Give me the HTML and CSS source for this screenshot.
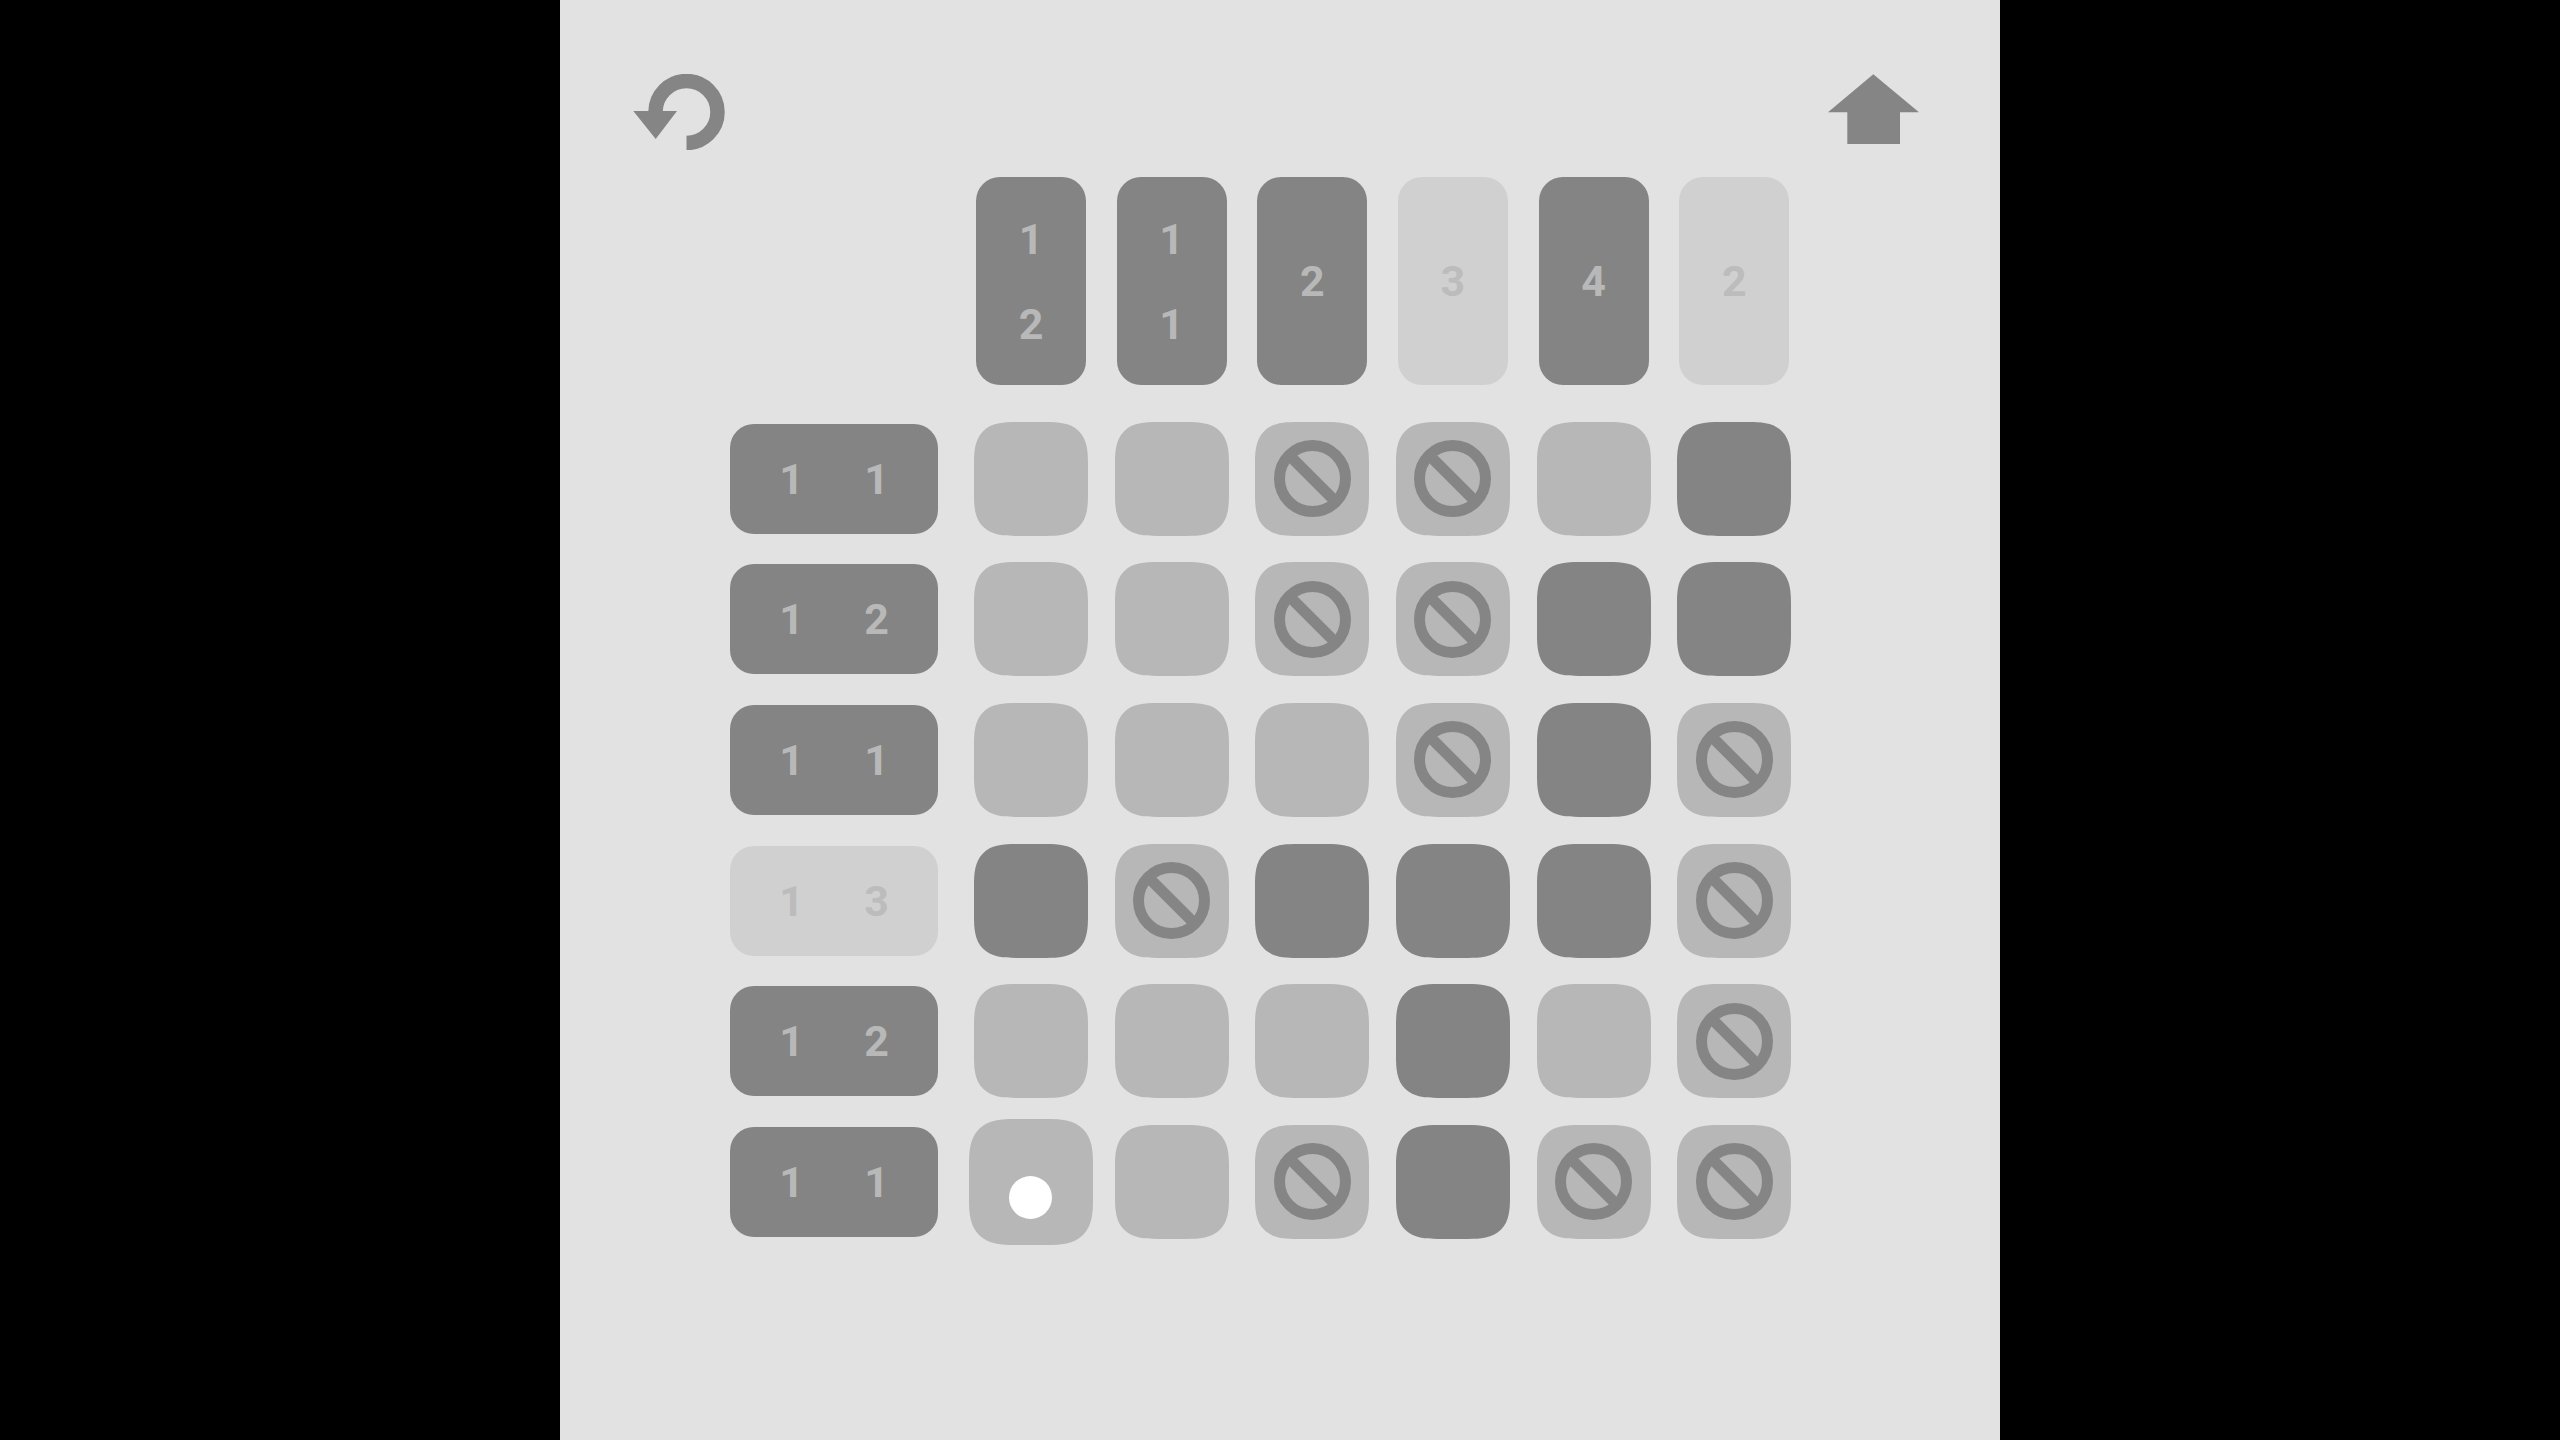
FILE: index.html
```html
<!DOCTYPE html>
<html lang="en">
<head>
  <meta charset="UTF-8" />
  <title>Nonogram</title>
  <link rel="stylesheet" href="styles.css">
</head>
<body>
  <svg class="defs" width="0" height="0">
    <symbol id="ban" viewBox="0 0 77 77">
      <circle cx="38.5" cy="38.5" r="33" fill="none" stroke="currentColor" stroke-width="11" />
      <line x1="15" y1="15" x2="62" y2="62" stroke="currentColor" stroke-width="11" />
    </symbol>
  </svg>

  <main class="panel">
    <div class="topbar">
      <svg class="icon-undo" width="92" height="76" viewBox="633 74 92 76">
        <path d="M655.5 112 A31 31 0 1 1 686.5 143" fill="none" stroke="#858585" stroke-width="14.5" />
        <path d="M633.3 111 H677 L655.7 139 Z" fill="#858585" />
      </svg>
      <svg class="icon-home" width="91" height="70" viewBox="1828 74 91 70">
        <path d="M1873.3 74.3 L1919 112.3 H1900 V144 H1847.3 V112.3 H1828 Z" fill="#858585" />
      </svg>
    </div>

    <div class="board">
      <!-- top clues -->
      <div></div>
      <div class="clue col"><span>1</span><span>2</span></div>
      <div class="clue col"><span>1</span><span>1</span></div>
      <div class="clue col"><span>2</span></div>
      <div class="clue col done"><span>3</span></div>
      <div class="clue col"><span>4</span></div>
      <div class="clue col done"><span>2</span></div>

      <!-- row 1 -->
      <div class="clue row"><span>1</span><span>1</span></div>
      <div class="cell"></div>
      <div class="cell"></div>
      <div class="cell"><svg class="ban"><use href="#ban" /></svg></div>
      <div class="cell"><svg class="ban"><use href="#ban" /></svg></div>
      <div class="cell"></div>
      <div class="cell on"></div>

      <!-- row 2 -->
      <div class="clue row"><span>1</span><span>2</span></div>
      <div class="cell"></div>
      <div class="cell"></div>
      <div class="cell"><svg class="ban"><use href="#ban" /></svg></div>
      <div class="cell"><svg class="ban"><use href="#ban" /></svg></div>
      <div class="cell on"></div>
      <div class="cell on"></div>

      <!-- row 3 -->
      <div class="clue row"><span>1</span><span>1</span></div>
      <div class="cell"></div>
      <div class="cell"></div>
      <div class="cell"></div>
      <div class="cell"><svg class="ban"><use href="#ban" /></svg></div>
      <div class="cell on"></div>
      <div class="cell"><svg class="ban"><use href="#ban" /></svg></div>

      <!-- row 4 -->
      <div class="clue row done"><span>1</span><span>3</span></div>
      <div class="cell on"></div>
      <div class="cell"><svg class="ban"><use href="#ban" /></svg></div>
      <div class="cell on"></div>
      <div class="cell on"></div>
      <div class="cell on"></div>
      <div class="cell"><svg class="ban"><use href="#ban" /></svg></div>

      <!-- row 5 -->
      <div class="clue row"><span>1</span><span>2</span></div>
      <div class="cell"></div>
      <div class="cell"></div>
      <div class="cell"></div>
      <div class="cell on"></div>
      <div class="cell"></div>
      <div class="cell"><svg class="ban"><use href="#ban" /></svg></div>

      <!-- row 6 -->
      <div class="clue row"><span>1</span><span>1</span></div>
      <div class="cell current"><div class="dot"></div></div>
      <div class="cell"></div>
      <div class="cell"><svg class="ban"><use href="#ban" /></svg></div>
      <div class="cell on"></div>
      <div class="cell"><svg class="ban"><use href="#ban" /></svg></div>
      <div class="cell"><svg class="ban"><use href="#ban" /></svg></div>
    </div>
  </main>
</body>
</html>
```

FILE: styles.css
```css
html, body { margin: 0; height: 100%; background: #000; overflow: hidden; }
.defs { display: block; height: 0; }

.panel { width: 1440px; height: 1440px; margin: 0 auto; background: #e2e2e2; box-sizing: border-box; padding: 74px 81px 0 73px; }

.topbar { display: flex; justify-content: space-between; align-items: flex-start; height: 103px; }
.topbar svg { display: block; }

.board { display: grid; grid-template-columns: 217.33px repeat(6, 114px); grid-template-rows: 218px repeat(6, 114px); gap: 26.67px; margin-left: 97px; }

.clue { display: flex; align-items: center; justify-content: center; background: #848484; color: #b8b8b8; border-radius: 24px; font: 700 43px Roboto, sans-serif; }
.clue span { display: flex; align-items: center; justify-content: center; width: 85px; height: 85px; }
.clue.col { flex-direction: column; width: 110px; height: 208px; justify-self: center; }
.clue.row { width: 208px; height: 110px; justify-self: start; align-self: center; }
.clue.done { background: #d0d0d0; color: #bcbcbc; }

.cell { display: flex; align-items: center; justify-content: center; background: #b7b7b7; border-radius: 42px; corner-shape: superellipse(1.5); color: #858585; }
.cell.on { background: #848484; }
.cell.current { margin: -6px -5px; border-radius: 46px; }

.ban { display: block; width: 77px; height: 77px; }
.dot { width: 43px; height: 43px; margin-top: 32px; border-radius: 50%; background: #fff; }
```
